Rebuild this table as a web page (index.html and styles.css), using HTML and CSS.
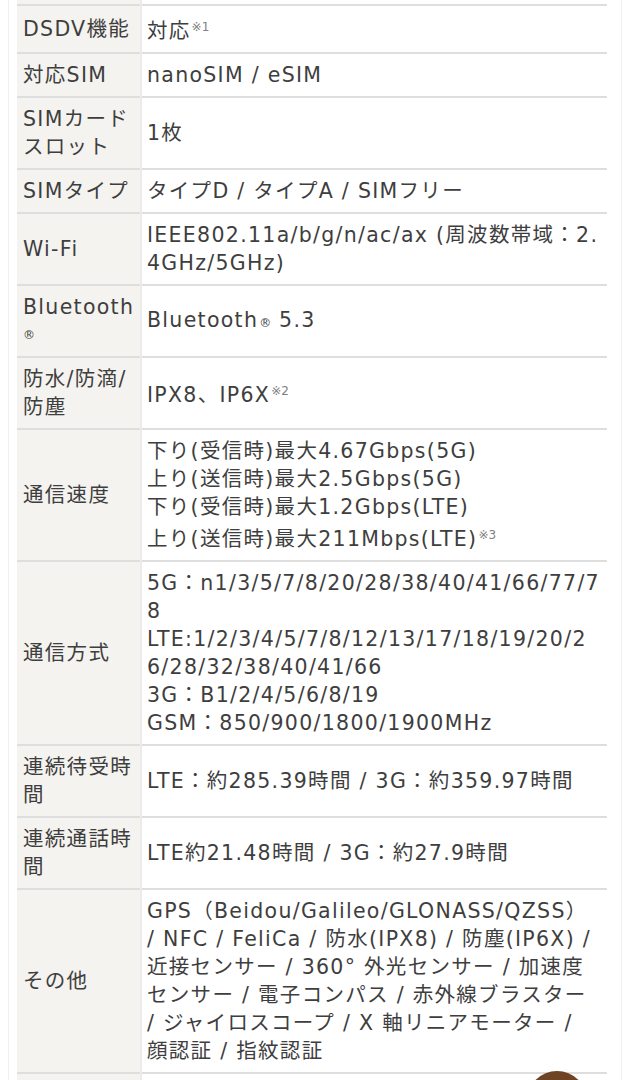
FILE: index.html
```html
<!DOCTYPE html>
<html lang="ja">
  <head>
    <meta charset="UTF-8" />
    <meta name="viewport" content="width=device-width, initial-scale=1.0"/>
    <title>スペック</title>
    <link rel="stylesheet" href="styles.css">
  </head>
  <body>

    <div class="page">
      <table class="spec">
        <tr class="cut"><th></th><td></td></tr>
        <tr><th>DSDV機能</th><td>対応<sup>※1</sup></td></tr>
        <tr><th>対応SIM</th><td>nanoSIM / eSIM</td></tr>
        <tr><th>SIMカードスロット</th><td>1枚</td></tr>
        <tr><th>SIMタイプ</th><td>タイプD / タイプA / SIMフリー</td></tr>
        <tr><th>Wi-Fi</th><td>IEEE802.11a/b/g/n/ac/ax (周波数帯域：2.4GHz/5GHz)</td></tr>
        <tr><th>Bluetooth<span class="reg">®</span></th><td>Bluetooth<span class="reg">®</span> 5.3</td></tr>
        <tr><th>防水/防滴/防塵</th><td>IPX8、IP6X<sup>※2</sup></td></tr>
        <tr>
          <th>通信速度</th>
          <td>
            下り(受信時)最大4.67Gbps(5G)<br>
            上り(送信時)最大2.5Gbps(5G)<br>
            下り(受信時)最大1.2Gbps(LTE)<br>
            上り(送信時)最大211Mbps(LTE)<sup>※3</sup>
          </td>
        </tr>
        <tr>
          <th>通信方式</th>
          <td>
            5G：n1/3/5/7/8/20/28/38/40/41/66/77/78<br>
            LTE:1/2/3/4/5/7/8/12/13/17/18/19/20/26/28/32/38/40/41/66<br>
            3G：B1/2/4/5/6/8/19<br>
            GSM：850/900/1800/1900MHz
          </td>
        </tr>
        <tr><th>連続待受時間</th><td>LTE：約285.39時間 / 3G：約359.97時間</td></tr>
        <tr><th>連続通話時間</th><td>LTE約21.48時間 / 3G：約27.9時間</td></tr>
        <tr>
          <th>その他</th>
          <td class="words">GPS（Beidou/Galileo/GLONASS/QZSS） / NFC / FeliCa / 防水(IPX8) / 防塵(IP6X) / 近接センサー / 360° 外光センサー / 加速度センサー / 電子コンパス / 赤外線ブラスター / ジャイロスコープ / X 軸リニアモーター / 顔認証 / 指紋認証</td>
        </tr>
        <tr><th></th><td></td></tr>
      </table>
    </div>

    <!-- チャットボタン -->
    <div class="chat-btn"></div>

  </body>
</html>
```

FILE: styles.css
```css
body {
  margin: 0;
  background-color: #ffffff;
  color: #3e3e3e;
  font-family: "DejaVu Sans", "Noto Sans CJK JP", sans-serif;
  overflow: hidden;
}

.page {
  margin: 0 2px 0 8px;
  padding: 0 14px 0 8px;
  border-left: 1px solid #f0f0f0;
  border-right: 1px solid #f0f0f0;
  height: 1080px;
}

.spec {
  width: 100%;
  border-collapse: collapse;
  font-size: 20.5px;
  line-height: 28px;
  letter-spacing: 1.3px;
}

.spec th,
.spec td {
  border-top: 2px solid #dedede;
  padding: 7px 5px;
  text-align: left;
  vertical-align: middle;
  font-weight: normal;
}

.spec th {
  width: 116px;
  padding: 7px 1px 7px 6px;
  background-color: #f4f3ef;
  border-right: 2px solid #ebebeb;
}

.spec td {
  word-break: break-all;
}

.spec td.words {
  word-break: normal;
  line-break: anywhere;
}

.spec .cut th,
.spec .cut td {
  border-top: none;
  padding: 0;
  height: 4px;
}

.spec sup {
  font-size: 12px;
  line-height: 28px;
  color: #808080;
  vertical-align: 7px;
  letter-spacing: 0;
  margin-left: 1px;
}

.reg {
  font-size: 12px;
  letter-spacing: 0;
  margin-left: 1px;
}

.spec th .reg {
  display: block;
  margin: 0;
}

.chat-btn {
  position: absolute;
  left: 527px;
  top: 1071px;
  width: 60px;
  height: 60px;
  border-radius: 50%;
  background-color: #6e4424;
}
```
